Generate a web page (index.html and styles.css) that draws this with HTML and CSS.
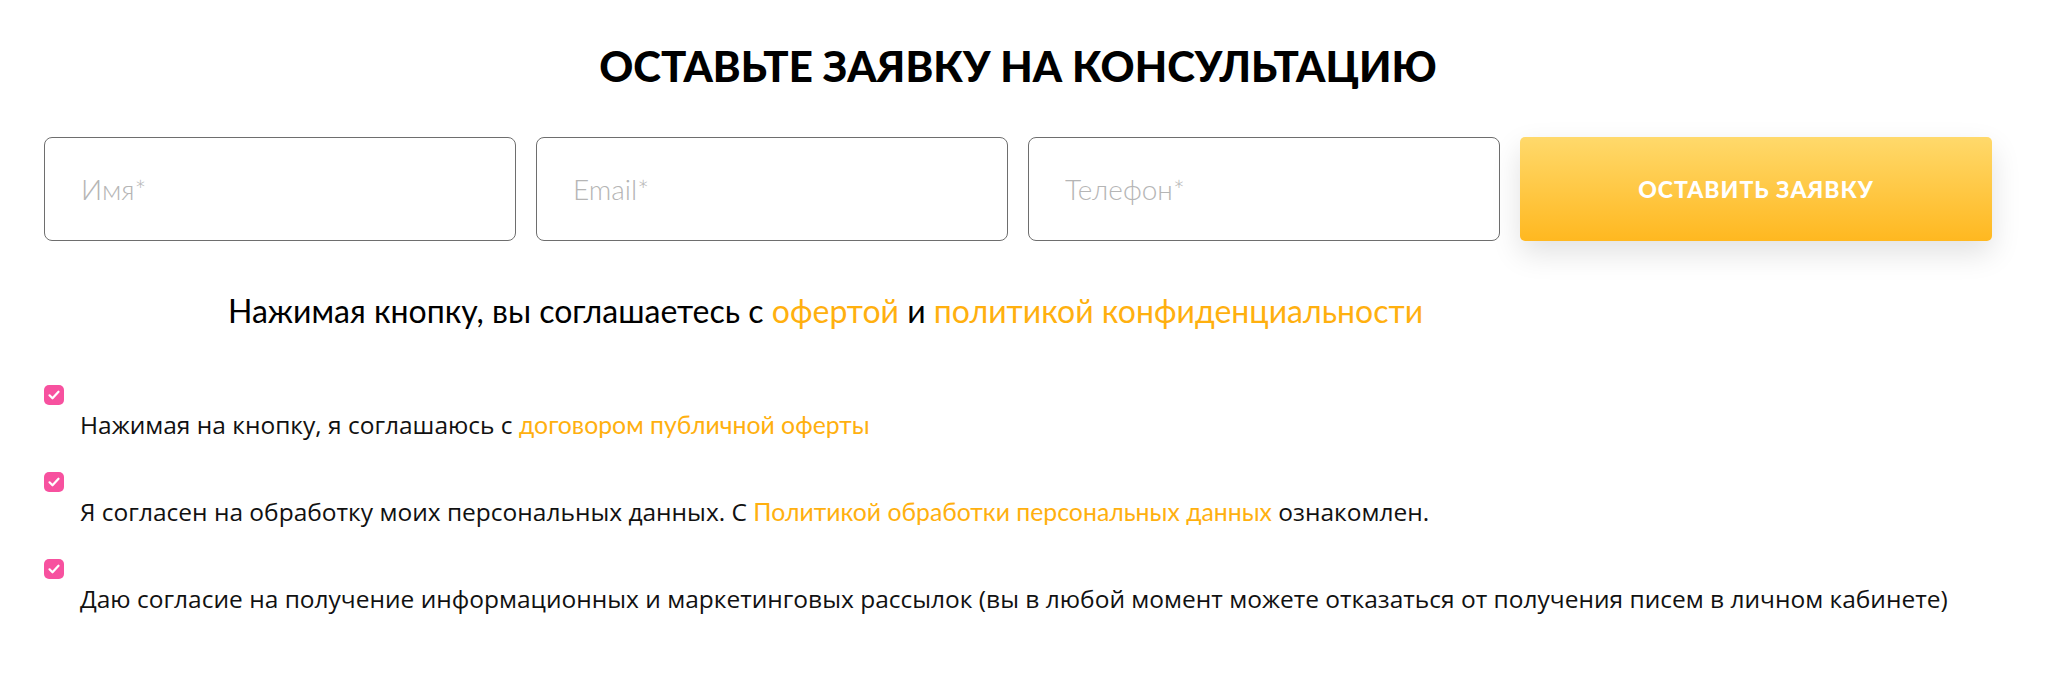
FILE: index.html
```html
<!DOCTYPE html>
<html lang="ru">
<head>
    <meta charset="UTF-8">
    <meta name="viewport" content="width=device-width, initial-scale=1.0">
    <title>Оставьте заявку</title>
    <link rel="stylesheet" href="styles.css">
</head>
<body>
    <section class="request">
        <h2 class="request-title">Оставьте заявку на консультацию</h2>

        <form class="request-form" onsubmit="return false">
            <input class="field" type="text" placeholder="Имя*">
            <input class="field" type="email" placeholder="Email*">
            <input class="field" type="tel" placeholder="Телефон*">
            <button class="btn-submit" type="submit">Оставить заявку</button>
        </form>

        <p class="request-note">
            Нажимая кнопку, вы соглашаетесь с <a href="#">офертой</a> и <a href="#">политикой конфиденциальности</a>
        </p>

        <div class="agreements">
            <label class="agree">
                <span class="check"><svg viewBox="0 0 20 20"><path d="M5.5 10.3l3 3 6-6.6"/></svg></span>
                <span class="agree-text">Нажимая на кнопку, я соглашаюсь с <a href="#">договором публичной оферты</a></span>
            </label>
            <label class="agree">
                <span class="check"><svg viewBox="0 0 20 20"><path d="M5.5 10.3l3 3 6-6.6"/></svg></span>
                <span class="agree-text">Я согласен на обработку моих персональных данных. С <a href="#">Политикой обработки персональных данных</a> ознакомлен.</span>
            </label>
            <label class="agree">
                <span class="check"><svg viewBox="0 0 20 20"><path d="M5.5 10.3l3 3 6-6.6"/></svg></span>
                <span class="agree-text">Даю согласие на получение информационных и маркетинговых рассылок (вы в любой момент можете отказаться от получения писем в личном кабинете)</span>
            </label>
        </div>
    </section>
</body>
</html>
```

FILE: styles.css
```css
body {
    margin: 0;
    padding: 0;
    background: #fff;
    color: #000;
    font-family: 'Lato', 'Inter', sans-serif;
}

.request {
    width: 1948px;
    margin-left: 44px;
    padding-top: 34px;
}

.request-title {
    margin: 0;
    text-align: center;
    font-size: 42px;
    font-weight: 900;
    line-height: 64px;
    text-transform: uppercase;
}

.request-form {
    display: grid;
    grid-template-columns: repeat(4, 1fr);
    gap: 20px;
    margin-top: 39px;
}

.field {
    box-sizing: border-box;
    height: 104px;
    padding: 0 36px;
    border: 1.5px solid #6e6e6e;
    border-radius: 8px;
    font-family: 'Lato', 'Inter', sans-serif;
    font-size: 28px;
    font-weight: 300;
    color: #333;
    outline: none;
}

.field::placeholder {
    color: #b5b5b5;
}

.btn-submit {
    height: 104px;
    border: none;
    border-radius: 5px;
    background: linear-gradient(180deg, #ffd96b 0%, #ffb820 100%);
    box-shadow: 0 12px 30px rgba(0, 0, 0, 0.12);
    color: #fff;
    font-family: 'Lato', 'Inter', sans-serif;
    font-size: 23px;
    font-weight: 900;
    letter-spacing: 1px;
    text-transform: uppercase;
    cursor: pointer;
}

.request-note {
    margin: 48px 0 0;
    padding-left: 184px;
    font-size: 32px;
    line-height: 44px;
}

.request-note a,
.agree a {
    color: #ffb00f;
    text-decoration: none;
}

.agree a {
    font-family: 'Lato', 'Inter', sans-serif;
    font-size: 24.8px;
}

.agreements {
    margin-top: 52px;
}

.agree {
    display: block;
    height: 87px;
}

.check {
    display: block;
    width: 20px;
    height: 20px;
    border-radius: 5px;
    background: #f7519f;
}

.check svg {
    display: block;
    width: 20px;
    height: 20px;
    fill: none;
    stroke: #fff;
    stroke-width: 2.2;
    stroke-linecap: round;
    stroke-linejoin: round;
}

.agree-text {
    display: block;
    margin-top: 2px;
    padding-left: 36px;
    font-family: 'Open Sans', sans-serif;
    font-size: 24.5px;
    line-height: 36px;
    color: #111;
}
```
